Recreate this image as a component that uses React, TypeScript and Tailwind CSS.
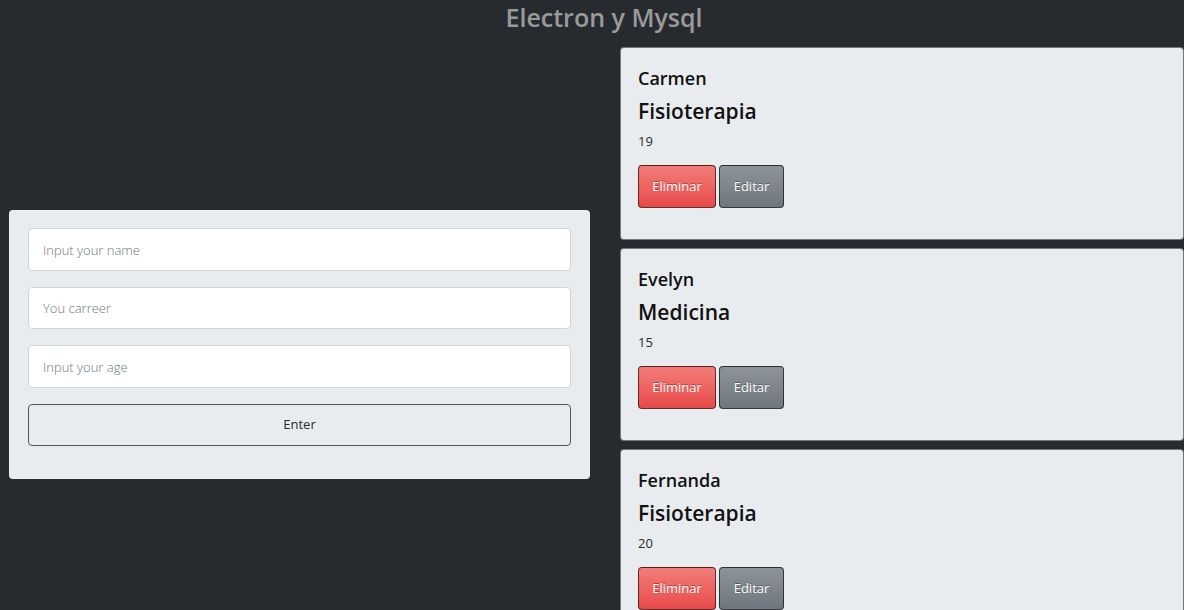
import React from "react";

const PEOPLE = [
  { id: 1, name: "Carmen", career: "Fisioterapia", age: 19 },
  { id: 2, name: "Evelyn", career: "Medicina", age: 15 },
  { id: 3, name: "Fernanda", career: "Fisioterapia", age: 20 },
];

const font = { fontFamily: '"Open Sans", "Noto Sans", sans-serif' };

function PersonCard({ name, career, age }: { name: string; career: string; age: number }) {
  return (
    <div className="h-[193px] shrink-0 rounded-[4px] border border-black/50 bg-[#e9ecef] px-[17px] pt-[18px]">
      <h5 className="text-[18px] font-semibold leading-[24px] text-[#111]">{name}</h5>
      <h4 className="mt-[8px] text-[21px] font-semibold leading-[27px] text-[#111]">{career}</h4>
      <p className="mt-[6px] text-[13px] leading-[20px] text-[#2a2a2a]">{age}</p>
      <div className="mt-[14px] flex gap-[3px]">
        <button className="h-[43px] w-[78px] rounded-[4px] border border-black/60 bg-gradient-to-b from-[#f27c78] to-[#e8494a] text-[13px] font-medium text-white [text-shadow:0_-1px_0_rgba(0,0,0,0.35)]">
          Eliminar
        </button>
        <button className="h-[43px] w-[65px] rounded-[4px] border border-black/60 bg-gradient-to-b from-[#8d9499] to-[#6f777e] text-[13px] font-medium text-white [text-shadow:0_-1px_0_rgba(0,0,0,0.35)]">
          Editar
        </button>
      </div>
    </div>
  );
}

export default function App() {
  return (
    <div className="h-[610px] w-[1184px] overflow-hidden bg-[#272b30]" style={font}>
      {/* Title */}
      <h1 className="h-[47px] pl-[24px] text-center text-[25px] font-semibold leading-[34px] text-[#9a9a9a]">
        Electron y Mysql
      </h1>

      <div className="flex items-center">
        {/* Form */}
        <div className="w-[620px] shrink-0 pl-[9px] pr-[30px]">
          <form className="flex flex-col gap-[16px] rounded-[4px] border border-white/20 bg-[#e9ecef] px-[18px] pb-[32px] pt-[17px]">
            <input
              placeholder="Input your name"
              className="h-[43px] rounded-[4px] border border-[#ced4da] bg-white px-[14px] text-[13px] font-light outline-none placeholder:text-[#6f767d]"
            />
            <input
              placeholder="You carreer"
              className="h-[42px] rounded-[4px] border border-[#ced4da] bg-white px-[14px] text-[13px] font-light outline-none placeholder:text-[#6f767d]"
            />
            <input
              placeholder="Input your age"
              className="h-[43px] rounded-[4px] border border-[#ced4da] bg-white px-[14px] text-[13px] font-light outline-none placeholder:text-[#6f767d]"
            />
            <button
              type="button"
              className="h-[42px] rounded-[4px] border border-[#52575c] text-[13px] text-[#272b30]"
            >
              Enter
            </button>
          </form>
        </div>

        {/* List */}
        <div className="flex flex-1 flex-col gap-[8px]">
          {PEOPLE.map((p) => (
            <PersonCard key={p.id} name={p.name} career={p.career} age={p.age} />
          ))}
        </div>
      </div>
    </div>
  );
}
